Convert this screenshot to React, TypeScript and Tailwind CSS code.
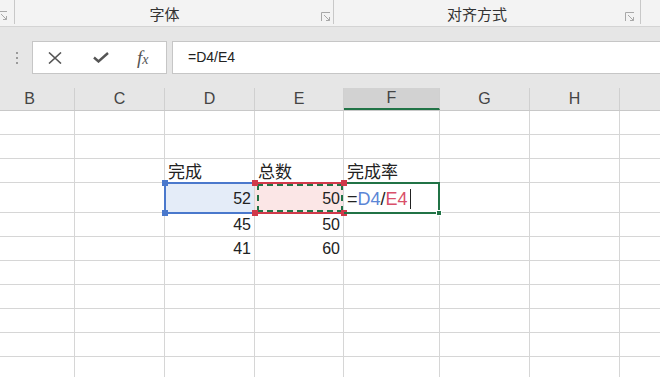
import React from "react";

const widths = [90, 90, 90, 89, 96, 90, 90, 100];
const letters = ["B", "C", "D", "E", "F", "G", "H", ""];
const rowHeights = [24, 24, 24, 30, 24, 24, 24, 24, 24, 24, 24];

type Cell = { text?: React.ReactNode; align?: "left" | "right"; bg?: string; cls?: string };

const cells: Record<string, Cell> = {
  "2-2": { text: "完成", align: "left", cls: "font-['Noto_Sans_CJK_SC',sans-serif] text-[17px]" },
  "2-3": { text: "总数", align: "left", cls: "font-['Noto_Sans_CJK_SC',sans-serif] text-[17px]" },
  "2-4": { text: "完成率", align: "left", cls: "font-['Noto_Sans_CJK_SC',sans-serif] text-[17px]" },
  "3-2": { text: "52", align: "right", bg: "bg-[#e4ecf8]", cls: "pb-[3px]" },
  "3-3": { text: "50", align: "right", bg: "bg-[#fbe6e6]", cls: "pb-[3px]" },
  "3-4": {
    text: (
      <span className="flex items-center">
        <span>=</span>
        <span className="text-[#5b86d6]">D4</span>
        <span>/</span>
        <span className="text-[#d9506a]">E4</span>
        <span className="inline-block w-px h-[20px] bg-[#222] ml-[2px]" />
      </span>
    ),
    align: "left",
    cls: "text-[18px] pb-[3px]",
  },
  "4-2": { text: "45", align: "right" },
  "4-3": { text: "50", align: "right" },
  "5-2": { text: "41", align: "right" },
  "5-3": { text: "60", align: "right" },
};

function Launcher() {
  return (
    <svg width="10" height="10" viewBox="0 0 10 10" fill="none" stroke="#a8a8a8" strokeWidth="1">
      <path d="M0.5 9V0.5H9" />
      <path d="M3 3L8.5 8.5" />
      <path d="M5 8.5H8.5V5" />
    </svg>
  );
}

export default function App() {
  const sans = "font-['Liberation_Sans','Noto_Sans_CJK_SC',sans-serif]";
  return (
    <div className={`w-[660px] h-[377px] overflow-hidden bg-white ${sans} text-[#222]`}>
      {/* Ribbon */}
      <div className="h-[27px] bg-[#f3f3f3] border-b border-[#d4d4d4] flex">
        <div className="w-[15px] relative flex items-start">
          <div className="absolute left-[-2px] top-[11px]">
            <Launcher />
          </div>
          <div className="absolute right-0 top-0 w-px h-[24px] bg-[#c8c8c8]" />
        </div>
        <div className="w-[319px] relative flex items-center justify-center pr-[20px]">
          <span className="text-[15px] text-[#333] font-['Noto_Sans_CJK_SC',sans-serif] leading-none">字体</span>
          <div className="absolute right-[3px] top-[12px]">
            <Launcher />
          </div>
          <div className="absolute right-0 top-0 w-px h-[24px] bg-[#c8c8c8]" />
        </div>
        <div className="w-[307px] relative flex items-center justify-center pr-[21px]">
          <span className="text-[15px] text-[#333] font-['Noto_Sans_CJK_SC',sans-serif] leading-none">对齐方式</span>
          <div className="absolute right-[6px] top-[12px]">
            <Launcher />
          </div>
          <div className="absolute right-0 top-0 w-px h-[24px] bg-[#c8c8c8]" />
        </div>
      </div>

      {/* Formula bar */}
      <div className="h-[61px] bg-[#e6e6e6] flex items-start pt-[14px]">
        <div className="w-[32px] h-[33px] flex flex-col items-center justify-center gap-[3px] pl-[2px]">
          <span className="w-[2px] h-[2px] bg-[#9a9a9a]" />
          <span className="w-[2px] h-[2px] bg-[#9a9a9a]" />
          <span className="w-[2px] h-[2px] bg-[#9a9a9a]" />
        </div>
        <div className="w-[135px] h-[33px] bg-white border border-[#c6c6c6] flex items-center">
          <div className="w-[15px]" />
          <svg width="14" height="12" viewBox="0 0 14 12" stroke="#555" strokeWidth="1.6" fill="none">
            <path d="M1 0.5L13 11.5M13 0.5L1 11.5" />
          </svg>
          <div className="w-[31px]" />
          <svg width="16" height="11" viewBox="0 0 16 11" stroke="#555" strokeWidth="2.4" fill="none" strokeLinejoin="miter">
            <path d="M1 5.5L5.5 9.5L15 1" />
          </svg>
          <div className="w-[28px]" />
          <span className="font-['Liberation_Serif',serif] italic text-[#555] text-[19px] leading-none">
            f<span className="text-[14px]">x</span>
          </span>
        </div>
        <div className="w-[5px]" />
        <div className="flex-1 h-[33px] bg-white border border-[#c6c6c6] border-r-0 flex items-center pl-[15px]">
          <span className="text-[14px] text-[#222]">=D4/E4</span>
        </div>
      </div>

      {/* Column headers */}
      <div className="h-[23px] flex ml-[-15px] bg-[#e6e6e6] border-b border-[#c8c8c8]">
        {widths.map((w, i) => (
          <div
            key={i}
            style={{ width: w }}
            className={`shrink-0 h-full flex items-center justify-center text-[16px] text-[#444] border-r border-[#d0d0d0] ${
              i === 4 ? "bg-[#d2d2d2] border-b-2 border-b-[#217346]" : ""
            }`}
          >
            {letters[i]}
          </div>
        ))}
      </div>

      {/* Grid */}
      <div className="relative ml-[-15px]">
        {rowHeights.map((h, r) => (
          <div key={r} className="flex" style={{ height: h }}>
            {widths.map((w, c) => {
              const cell = cells[`${r}-${c}`];
              return (
                <div
                  key={c}
                  style={{ width: w }}
                  className={`shrink-0 h-full border-r border-b border-[#d6d6d6] flex items-end pb-[1px] px-[3px] text-[16px] leading-[20px] ${
                    cell?.align === "right" ? "justify-end" : "justify-start"
                  } ${cell?.bg ?? ""} ${cell?.cls ?? ""}`}
                >
                  {cell?.text}
                </div>
              );
            })}
          </div>
        ))}

        {/* D4 blue selection */}
        <div className="absolute left-[180px] top-[71px] w-[90px] h-[2px] bg-[#4a78cc]" />
        <div className="absolute left-[180px] top-[101px] w-[90px] h-[2px] bg-[#4a78cc]" />
        <div className="absolute left-[179px] top-[71px] w-[2px] h-[32px] bg-[#4a78cc]" />
        <div className="absolute left-[177px] top-[69px] w-[6px] h-[6px] bg-[#4a78cc]" />
        <div className="absolute left-[177px] top-[99px] w-[6px] h-[6px] bg-[#4a78cc]" />

        {/* E4 red reference */}
        <div className="absolute left-[270px] top-[71px] w-[89px] h-[2px] bg-[#d0394a]" />
        <div className="absolute left-[270px] top-[101px] w-[89px] h-[2px] bg-[#d0394a]" />
        <div className="absolute left-[272px] top-[73px] w-[86px] h-[28px] border-2 border-dashed border-[#217346]" />
        <div className="absolute left-[267px] top-[69px] w-[6px] h-[6px] bg-[#d0394a]" />
        <div className="absolute left-[267px] top-[99px] w-[6px] h-[6px] bg-[#d0394a]" />
        <div className="absolute left-[356px] top-[69px] w-[6px] h-[6px] bg-[#d0394a]" />
        <div className="absolute left-[356px] top-[99px] w-[6px] h-[6px] bg-[#d0394a]" />

        {/* F4 active cell */}
        <div className="absolute left-[362px] top-[71px] w-[93px] h-[2px] bg-[#217346]" />
        <div className="absolute left-[359px] top-[101px] w-[96px] h-[2px] bg-[#217346]" />
        <div className="absolute left-[453px] top-[71px] w-[2px] h-[32px] bg-[#217346]" />
        <div className="absolute left-[451px] top-[99px] w-[6px] h-[6px] bg-[#217346] border border-white" />
      </div>
    </div>
  );
}
